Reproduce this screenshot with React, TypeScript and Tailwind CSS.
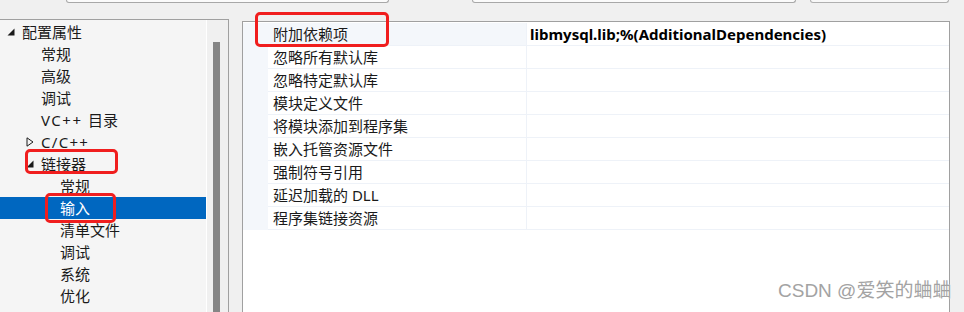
import React from "react";

const cjk = { fontFamily: '"Noto Sans", "Noto Sans CJK SC", sans-serif' };

type TreeItem = {
  label: React.ReactNode;
  depth: number;
  icon?: "open" | "closed";
  selected?: boolean;
};

const tree: TreeItem[] = [
  { label: "配置属性", depth: 0, icon: "open" },
  { label: "常规", depth: 1 },
  { label: "高级", depth: 1 },
  { label: "调试", depth: 1 },
  {
    label: (
      <>
        <span className="tracking-[1.5px]">VC++ </span>目录
      </>
    ),
    depth: 1,
  },
  { label: <span className="tracking-[1.3px]">C/C++</span>, depth: 1, icon: "closed" },
  { label: "链接器", depth: 1, icon: "open" },
  { label: "常规", depth: 2 },
  { label: "输入", depth: 2, selected: true },
  { label: "清单文件", depth: 2 },
  { label: "调试", depth: 2 },
  { label: "系统", depth: 2 },
  { label: "优化", depth: 2 },
];

const props = [
  "附加依赖项",
  "忽略所有默认库",
  "忽略特定默认库",
  "模块定义文件",
  "将模块添加到程序集",
  "嵌入托管资源文件",
  "强制符号引用",
  "延迟加载的 DLL",
  "程序集链接资源",
];

function OpenTri({ fill }: { fill: string }) {
  return (
    <svg width="8" height="8" viewBox="0 0 8 8">
      <path d="M7.5 0.5 L7.5 7.5 L0.5 7.5 Z" fill={fill} />
    </svg>
  );
}

function ClosedTri() {
  return (
    <svg width="8" height="10" viewBox="0 0 8 10">
      <path d="M1 0.8 L7 5 L1 9.2 Z" fill="none" stroke="#1a1a1a" strokeWidth="1" />
    </svg>
  );
}

function TreeRow({ item }: { item: TreeItem }) {
  const textLeft = [22, 41, 60][item.depth];
  const iconLeft = textLeft - 15;
  return (
    <div
      className={`flex h-[22px] items-center text-[15px] leading-none ${
        item.selected ? "bg-[#0067c0] text-white" : "text-[#1a1a1a]"
      }`}
      style={{ paddingLeft: iconLeft }}
    >
      <div className="flex w-[15px] items-center">
        {item.icon === "open" && <OpenTri fill={item.selected ? "#fff" : "#1a1a1a"} />}
        {item.icon === "closed" && <ClosedTri />}
      </div>
      <span className="whitespace-pre">{item.label}</span>
    </div>
  );
}

function RedBox({ className }: { className: string }) {
  return (
    <div
      className={`pointer-events-none absolute rounded-[5px] border-[3px] border-[#f01e1e] ${className}`}
    />
  );
}

export default function App() {
  return (
    <div
      className="relative h-[312px] w-[964px] overflow-hidden bg-[#f0f0f0]"
      style={cjk}
    >
      {/* top strip with dropdown bottoms */}
      <div className="flex h-[19px] items-start">
        <div className="ml-[66px] h-[3px] w-[323px] rounded-b-[3px] border-x border-b border-[#a8a8a8] bg-[#fbfbfb]" />
        <div className="ml-[83px] h-[3px] w-[324px] rounded-b-[3px] border-x border-b border-[#a8a8a8] bg-[#fbfbfb]" />
        <div className="ml-[14px] h-[3px] w-[139px] rounded-b-[3px] border-x border-b border-[#b0b0b0] bg-[#f8f8f8]" />
      </div>

      <div className="flex h-[293px] items-start">
        {/* left tree panel */}
        <div className="flex h-full w-[229px] border-r border-t border-[#a0a0a0] bg-[#f5f5f5]">
          <div className="w-[206px] pt-px">
            {tree.map((t, i) => (
              <TreeRow key={i} item={t} />
            ))}
          </div>
          <div className="w-px bg-white" />
          <div className="flex w-[21px] bg-[#f0f0f0] pt-[22px]">
            <div className="ml-[6px] h-full w-[7px] bg-[#858585]" />
          </div>
        </div>

        {/* right property grid */}
        <div className="ml-[13px] mt-[2px] h-[291px] w-[708px] border-l border-r border-t border-[#a0a0a0] bg-white">
          <div className="pt-px">
            {props.map((p, i) => (
              <div key={i} className="flex h-[23px]">
                <div className="w-[25px] bg-[#f4f7fb]" />
                <div
                  className={`flex w-[259px] items-center border-b border-r border-[#eef2f8] pl-[5px] text-[15px] leading-none text-[#1a1a1a] ${
                    i === 0 ? "bg-[#f4f7fb]" : ""
                  }`}
                >
                  {p}
                </div>
                <div
                  className="flex flex-1 items-center border-b border-[#eef2f8] pl-[3px] text-[15px] font-bold leading-none text-black"
                  style={{ fontFamily: '"Noto Sans", "Open Sans", sans-serif' }}
                >
                  {i === 0 ? "libmysql.lib;%(AdditionalDependencies)" : ""}
                </div>
              </div>
            ))}
          </div>
        </div>
      </div>

      {/* annotations */}
      <RedBox className="left-[255px] top-[12px] h-[35px] w-[134px]" />
      <RedBox className="left-[25px] top-[149px] h-[25px] w-[93px]" />
      <RedBox className="left-[45px] top-[193px] h-[30px] w-[71px]" />

      <div
        className="pointer-events-none absolute left-[778px] top-[281px] whitespace-nowrap text-[19px] leading-none text-[#a3a3a3]"
        style={{
          fontFamily: '"Liberation Sans", "Noto Sans CJK SC", sans-serif',
          textShadow: "0 0 1px #fff",
        }}
      >
        CSDN @爱笑的蛐蛐
      </div>
    </div>
  );
}
